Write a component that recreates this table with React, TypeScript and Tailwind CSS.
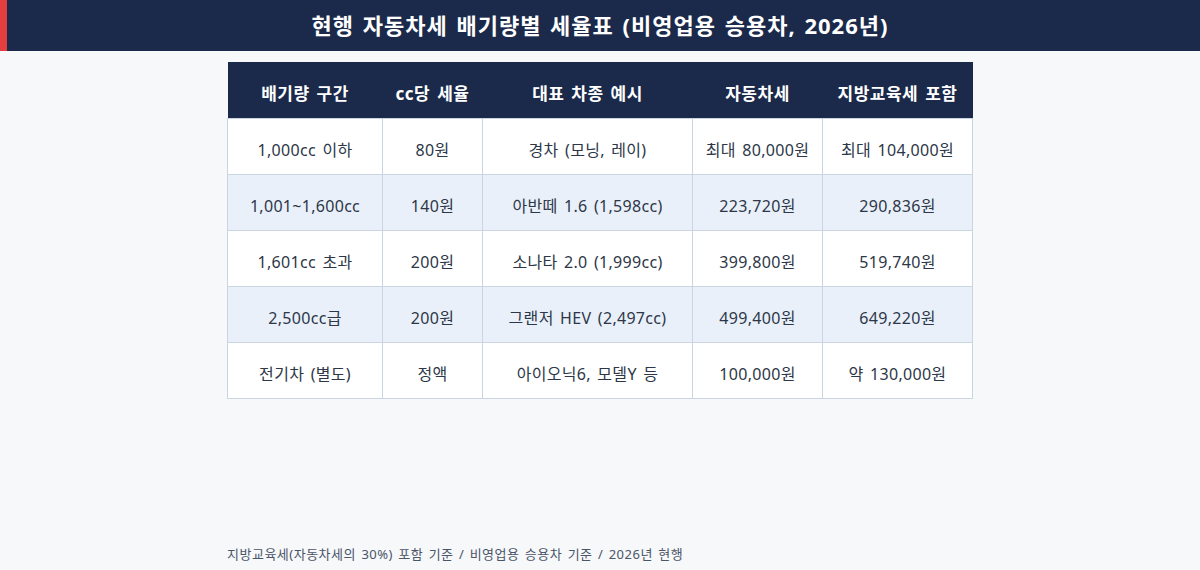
const FONT = "font-['Noto_Sans','Noto_Sans_CJK_KR',sans-serif]";

interface Row {
  range: string;
  rate: string;
  example: string;
  tax: string;
  withEdu: string;
}

const ROWS: Row[] = [
  { range: "1,000cc 이하", rate: "80원", example: "경차 (모닝, 레이)", tax: "최대 80,000원", withEdu: "최대 104,000원" },
  { range: "1,001~1,600cc", rate: "140원", example: "아반떼 1.6 (1,598cc)", tax: "223,720원", withEdu: "290,836원" },
  { range: "1,601cc 초과", rate: "200원", example: "소나타 2.0 (1,999cc)", tax: "399,800원", withEdu: "519,740원" },
  { range: "2,500cc급", rate: "200원", example: "그랜저 HEV (2,497cc)", tax: "499,400원", withEdu: "649,220원" },
  { range: "전기차 (별도)", rate: "정액", example: "아이오닉6, 모델Y 등", tax: "100,000원", withEdu: "약 130,000원" },
];

const HEADERS = ["배기량 구간", "cc당 세율", "대표 차종 예시", "자동차세", "지방교육세 포함"];
const WIDTHS = ["w-[155px]", "w-[100px]", "w-[210px]", "w-[130px]", "w-[150px]"];

export default function App() {
  return (
    <div className={`${FONT} bg-[#f7f8fa] w-[1200px] h-[570px] flex flex-col`}>
      {/* Title bar */}
      <div className="flex h-[51px] bg-[#1b2a4a]">
        <div className="w-[7px] bg-[#e53e3e]" />
        <h1 className="flex-1 flex items-center justify-center text-white font-bold text-[22px] tracking-[1px] [word-spacing:2px] pr-[7px]">
          현행 자동차세 배기량별 세율표 (비영업용 승용차, 2026년)
        </h1>
      </div>

      {/* Table */}
      <div className="flex justify-center pt-[11px]">
        <table className="border-collapse w-[745px] table-fixed">
          <thead>
            <tr className="bg-[#1b2a4a] h-[56px]">
              {HEADERS.map((h, i) => (
                <th
                  key={h}
                  className={`${WIDTHS[i]} text-white font-bold text-[17px] tracking-[0.5px] [word-spacing:2px] pt-[8px] text-center`}
                >
                  {h}
                </th>
              ))}
            </tr>
          </thead>
          <tbody>
            {ROWS.map((r, i) => (
              <tr key={r.range} className={`h-[56px] ${i % 2 === 1 ? "bg-[#e9f0fa]" : "bg-white"}`}>
                {[r.range, r.rate, r.example, r.tax, r.withEdu].map((c, j) => (
                  <td
                    key={j}
                    className="border border-[#cbd5e1] text-center text-[16px] tracking-[0.3px] [word-spacing:2px] text-[#2d3748] pt-[8px]"
                  >
                    {c}
                  </td>
                ))}
              </tr>
            ))}
          </tbody>
        </table>
      </div>

      {/* Footnote */}
      <div className="mt-auto pb-[6px] pl-[227px] text-[13px] tracking-[0.5px] [word-spacing:1.5px] text-[#4a5568]">
        지방교육세(자동차세의 30%) 포함 기준 / 비영업용 승용차 기준 / 2026년 현행
      </div>
    </div>
  );
}
